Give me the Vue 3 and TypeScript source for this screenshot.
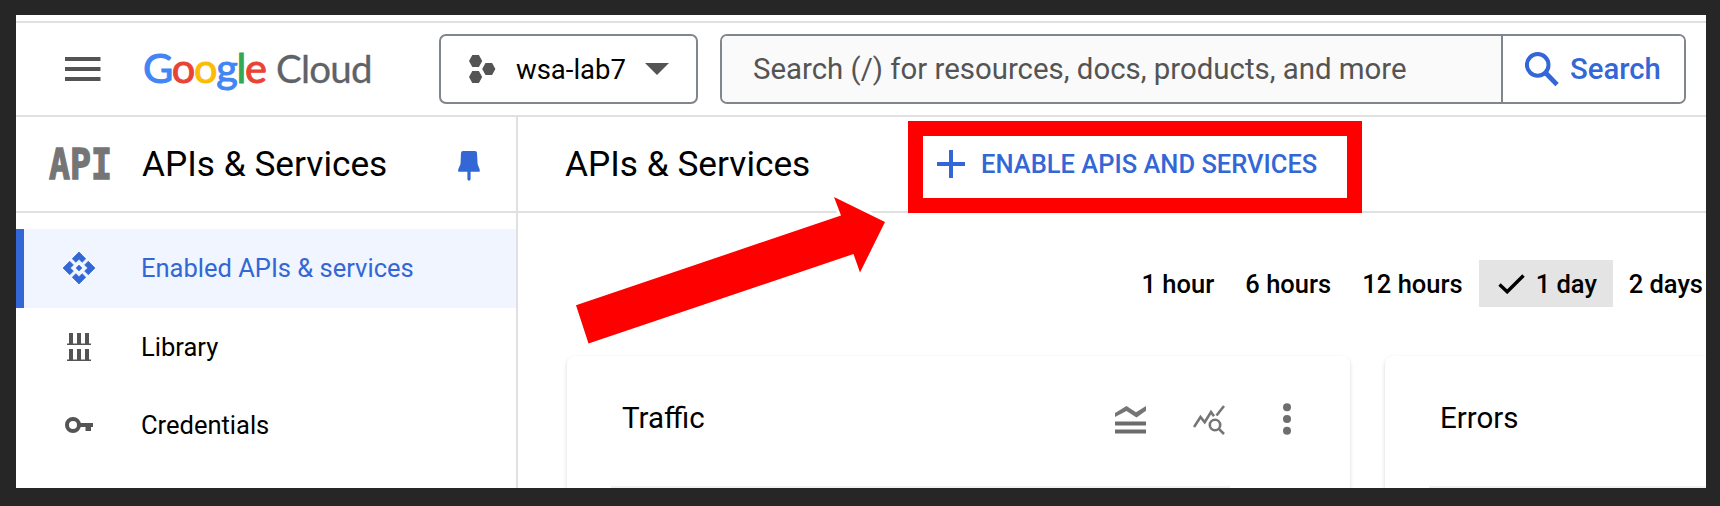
<script setup lang="ts">
interface NavItem {
  label: string
  icon: 'api' | 'library' | 'key'
  active?: boolean
}

const navItems: NavItem[] = [
  { label: 'Enabled APIs & services', icon: 'api', active: true },
  { label: 'Library', icon: 'library' },
  { label: 'Credentials', icon: 'key' },
]

const ranges: string[] = ['1 hour', '6 hours', '12 hours', '1 day', '2 days']
const selectedRange = '1 day'
</script>

<template>
  <div class="frame">
    <div class="console">
      <div class="strip"></div>
      <header class="topbar">
        <svg class="menu" width="36" height="24" viewBox="0 0 36 24">
          <path d="M0 0h35.5v4H0zM0 10h35.5v4H0zM0 20h35.5v4H0z" fill="#545454" />
        </svg>
        <div class="logo">
          <span class="google"><span class="b">G</span><span class="r">o</span><span class="y">o</span><span class="b">g</span><span class="g">l</span><span class="r">e</span></span>
          <span class="cloud">Cloud</span>
        </div>
        <button class="project">
          <svg width="27" height="28" viewBox="0 0 27 28" fill="#545454">
            <path d="M0 6L3.3 0h6.6L13.2 6 9.9 12H3.3zM0 22l3.3-6h6.6l3.3 6-3.3 6H3.3zM13.2 14l3.3-6h6.6l3.3 6-3.3 6h-6.6z" />
          </svg>
          <span class="project-name">wsa-lab7</span>
          <svg class="caret" width="24" height="12" viewBox="0 0 24 12"><path d="M0 0h24L12 12z" fill="#545454" /></svg>
        </button>
        <div class="search">
          <div class="search-input">Search (/) for resources, docs, products, and more</div>
          <button class="search-button">
            <svg width="34" height="35" viewBox="0 0 34 35" fill="none" stroke="#3367d6">
              <circle cx="12.7" cy="12.9" r="10.8" stroke-width="4" />
              <path d="M20.5 20.8L32 32.6" stroke-width="4.8" />
            </svg>
            <span>Search</span>
          </button>
        </div>
      </header>

      <div class="body">
        <aside class="sidebar">
          <div class="side-head">
            <svg class="api-logo" width="72" height="80" viewBox="-4 -22 72 80">
              <text x="1" y="33" textLength="63" lengthAdjust="spacingAndGlyphs">API</text>
            </svg>
            <span class="title">APIs &amp; Services</span>
            <svg class="pin" width="22" height="30" viewBox="0 0 22 30" fill="#3367d6">
              <path d="M5 0h12q2 0 2 2l.6 11 2.1 5.4v2.3H12.600v7.800L11 30l-1.600-1.500v-7.800H.2v-2.300L2.500 13 3 2q0-2 2-2z" />
            </svg>
          </div>
          <nav class="nav">
            <div v-for="item in navItems" :key="item.label" class="nav-item" :class="{ active: item.active }">
              <svg v-if="item.icon === 'api'" width="32" height="32" viewBox="1 1 22 22" fill="currentColor">
                <path d="M14 12l-2 2-2-2 2-2 2 2zm-2-6l2.120 2.120 2.500-2.500L12 1 7.380 5.620l2.500 2.500L12 6zm-6 6l2.120-2.120-2.500-2.500L1 12l4.620 4.620 2.500-2.500L6 12zm12 0l-2.120 2.120 2.500 2.500L23 12l-4.620-4.620-2.500 2.500L18 12zm-6 6l-2.120-2.120-2.500 2.500L12 23l4.620-4.620-2.500-2.500L12 18z" stroke="currentColor" stroke-width=".5" />
              </svg>
              <svg v-else-if="item.icon === 'library'" width="32" height="32" viewBox="0 0 32 32" fill="#545454">
                <path d="M6 2h4v10.500h4V2h4v10.500h4V2h4v10.500h2V14H4v-1.500h2zM6 18h4v10.500h4V18h4v10.500h4V18h4v10.500h2V30H4v-1.500h2z" />
              </svg>
              <svg v-else width="32" height="32" viewBox="0 0 32 32">
                <circle cx="10" cy="16" r="6" fill="none" stroke="#545454" stroke-width="4" />
                <path d="M16.500 14h13.500v4h-2v4h-5.500v-4h-6z" fill="#545454" />
              </svg>
              <span>{{ item.label }}</span>
            </div>
          </nav>
        </aside>

        <main class="main">
          <div class="main-head">
            <h1 class="title">APIs &amp; Services</h1>
            <button class="enable">
              <svg width="28" height="28" viewBox="0 0 28 28"><path d="M14 0v28M0 14h28" stroke="#3367d6" stroke-width="4" /></svg>
              <span>ENABLE APIS AND SERVICES</span>
            </button>
          </div>
          <div class="ranges">
            <div v-for="r in ranges" :key="r" class="range" :class="{ selected: r === selectedRange }">
              <svg v-if="r === selectedRange" width="27" height="20" viewBox="0 0 27 20">
                <path d="M1.500 10.500L9.200 17.800 25.500 1.500" fill="none" stroke="#000" stroke-width="3.400" />
              </svg>
              <span>{{ r }}</span>
            </div>
          </div>
          <div class="cards">
            <section class="card">
              <div class="card-head">
                <h2>Traffic</h2>
                <div class="tools">
                  <svg width="32" height="30" viewBox="0 0 32 30">
                    <path d="M0 8L11.500 1 21 7.300 31 1v4.800L21.500 12.500 11.500 6 0 12z" fill="#757575" />
                    <path d="M0 16.500h31v4H0zM0 24.500h31v4H0z" fill="#6c6c6c" />
                  </svg>
                  <svg width="32" height="32" viewBox="0 0 32 32" fill="none" stroke="#757575" stroke-width="2.600">
                    <path d="M1 23L7.500 13l4.200 5.300L18 8l3 4.200M23.500 11.500L31 2" />
                    <circle cx="22" cy="21" r="5.200" />
                    <path d="M25.600 24.600L31 30" />
                  </svg>
                  <svg class="dots" width="8" height="32" viewBox="0 0 8 32" fill="#6e6e6e">
                    <circle cx="4" cy="4.200" r="4" /><circle cx="4" cy="16" r="4" /><circle cx="4" cy="27.800" r="4" />
                  </svg>
                </div>
              </div>
              <div class="rule"></div>
            </section>
            <section class="card">
              <div class="card-head"><h2>Errors</h2></div>
              <div class="rule"></div>
            </section>
          </div>
        </main>
      </div>
    </div>

    <div class="highlight"></div>
    <svg class="arrow" width="320" height="160" viewBox="570 190 320 160">
      <path d="M576 305.300L841 215.500 834 197 885 222 860 272.500 853.500 254 588.500 343.500z" />
    </svg>
  </div>
</template>

<style>
body {
  margin: 0;
  background: #262626;
}
</style>

<style scoped>
.frame {
  position: relative;
  box-sizing: border-box;
  width: 1720px;
  height: 506px;
  padding: 15px 14px 18px 16px;
  background: #262626;
  overflow: hidden;
  font-family: Roboto, "Liberation Sans", sans-serif;
  color: #000;
}
.console {
  height: 473px;
  background: #fff;
  overflow: hidden;
  display: flex;
  flex-direction: column;
}
svg {
  display: block;
  flex: none;
}
button {
  font: inherit;
  margin: 0;
  padding: 0;
  background: #fff;
  border: 0;
}
h1,
h2 {
  margin: 0;
  font-weight: 400;
}
span,
h1,
h2 {
  white-space: nowrap;
}
.strip {
  height: 6px;
  flex: none;
  border-bottom: 2px solid #e0e0e0;
}
.topbar {
  height: 92px;
  flex: none;
  display: flex;
  align-items: center;
  border-bottom: 2px solid #e0e0e0;
}
.menu {
  margin-left: 49px;
}
.logo {
  display: flex;
  align-items: baseline;
  width: 295px;
  margin: -3px 0 0 42px;
  font-family: Lato, "Liberation Sans", sans-serif;
  line-height: 60px;
}
.google {
  width: 133px;
  font-size: 41.5px;
  letter-spacing: -1.3px;
}
.google span {
  -webkit-text-stroke: 1px currentColor;
}
.cloud {
  font-size: 38.5px;
  letter-spacing: -0.8px;
  color: #5f6368;
  -webkit-text-stroke: 0.3px currentColor;
}
.b { color: #4285f4; }
.r { color: #ea4335; }
.y { color: #fbbc04; }
.g { color: #34a853; }
.project {
  box-sizing: border-box;
  width: 259px;
  height: 70px;
  margin-left: 1px;
  padding-left: 28px;
  display: flex;
  align-items: center;
  border: 2px solid #80868b;
  border-radius: 7px;
  font-size: 27.5px;
}
.project-name {
  width: 109px;
  margin-left: 20px;
  text-align: left;
}
.caret {
  margin-left: 20px;
}
.search {
  box-sizing: border-box;
  width: 966px;
  height: 70px;
  margin-left: 22px;
  display: flex;
  border: 2px solid #80868b;
  border-radius: 7px;
  overflow: hidden;
}
.search-input {
  width: 748px;
  padding-left: 31px;
  line-height: 66px;
  font-size: 29.4px;
  color: #545454;
  background: #fafafa;
  white-space: nowrap;
}
.search-button {
  flex: 1;
  display: flex;
  align-items: center;
  padding-left: 22px;
  gap: 11px;
  border-left: 2px solid #80868b;
  font-size: 29.3px;
  font-weight: 500;
  color: #3367d6;
}
.body {
  flex: 1;
  display: flex;
}
.sidebar {
  width: 500px;
  flex: none;
  border-right: 2px solid #e0e0e0;
}
.side-head,
.main-head {
  height: 94px;
  display: flex;
  align-items: center;
  border-bottom: 2px solid #e0e0e0;
}
.api-logo {
  margin-left: 28px;
}
.api-logo text {
  font: bold 42px "DejaVu Sans Mono", monospace;
  fill: #757575;
  stroke: #757575;
  stroke-width: 1.4px;
}
.title {
  font-size: 35.25px;
  line-height: 48px;
}
.side-head .title {
  width: 316px;
  margin-left: 26px;
}
.pin {
  margin-top: 3px;
}
.nav {
  padding-top: 16px;
}
.nav-item {
  box-sizing: border-box;
  height: 78.6px;
  padding-left: 39px;
  display: flex;
  align-items: center;
  gap: 46px;
  border-left: 8px solid transparent;
  font-size: 25.5px;
}
.nav-item.active {
  color: #3367d6;
  background: #f0f5ff;
  border-left-color: #3367d6;
}
.main {
  flex: 1;
  min-width: 0;
  overflow: hidden;
}
.main-head {
  padding-left: 47px;
}
.main-head .title {
  width: 372px;
}
.enable {
  display: flex;
  align-items: center;
  gap: 16px;
  font-size: 25.5px;
  font-weight: 500;
  color: #3367d6;
}
.ranges {
  height: 47px;
  padding: 47px 3px 0 0;
  display: flex;
  justify-content: flex-end;
  align-items: center;
  font-size: 25.5px;
  font-weight: 500;
}
.range {
  height: 47px;
  margin-left: 31.2px;
  display: flex;
  align-items: center;
}
.range.selected {
  box-sizing: border-box;
  width: 134px;
  margin: 0 -15.2px 0 16px;
  padding-left: 19px;
  gap: 11px;
  background: #e4e4e4;
}
.cards {
  display: flex;
  gap: 35px;
  margin: 49px 0 0 49px;
}
.card {
  width: 783px;
  height: 180px;
  flex: none;
  border-radius: 8px;
  background: #fff;
  box-shadow: 0 2px 4px rgba(0, 0, 0, 0.16);
}
.card-head {
  height: 130px;
  padding: 0 59px 0 55px;
  display: flex;
  align-items: center;
  justify-content: space-between;
}
.card h2 {
  font-size: 29.5px;
  line-height: 40px;
  margin-top: -6px;
}
.tools {
  display: flex;
  align-items: center;
  gap: 46px;
  margin-top: -2px;
}
.dots {
  margin-left: 12px;
  margin-top: -3px;
}
.rule {
  height: 2px;
  width: 619px;
  margin-left: 44px;
  background: #f1f1f1;
}
.highlight {
  position: absolute;
  left: 908px;
  top: 121px;
  width: 424px;
  height: 62px;
  border: 15px solid #f00;
}
.arrow {
  position: absolute;
  left: 570px;
  top: 190px;
}
.arrow path {
  fill: #f00;
  stroke: #fff;
  stroke-width: 6px;
  paint-order: stroke;
}
</style>
